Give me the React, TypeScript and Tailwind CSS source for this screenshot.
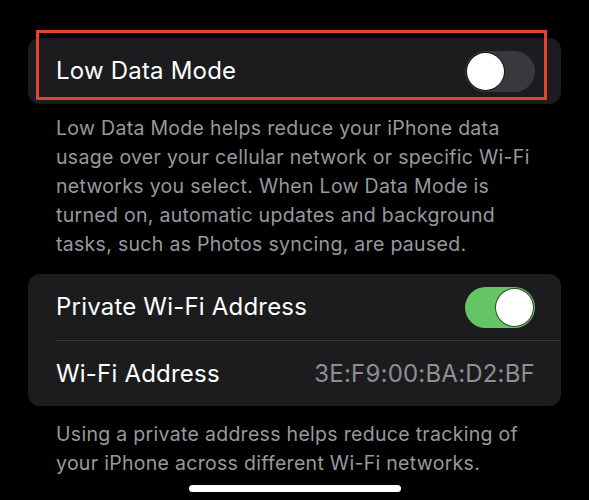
import React from 'react';

const font = { fontFamily: 'Inter, "Liberation Sans", sans-serif' };

const Toggle: React.FC<{ on: boolean }> = ({ on }) => (
  <div
    className={`relative h-[41px] w-[70px] shrink-0 rounded-full ${on ? 'bg-[#65c466]' : 'bg-[#39393d]'}`}
  >
    <div
      className={`absolute top-[2px] h-[37px] w-[37px] rounded-full bg-white shadow-[0_0_0_1px_rgba(0,0,0,0.6)] ${on ? 'right-[2px]' : 'left-[2px]'}`}
    />
  </div>
);

export default function App() {
  return (
    <div className="h-[500px] w-[589px] overflow-hidden bg-black text-white" style={font}>
      <div className="px-[28px] pt-[38px]">
        {/* Low Data Mode */}
        <div className="relative">
          <div className="flex h-[66px] items-center justify-between rounded-[12px] bg-[#1c1c1e] pl-[28px] pr-[26px]">
            <span className="text-[24px] tracking-[0.2px]">Low Data Mode</span>
            <Toggle on={false} />
          </div>
          <div className="pointer-events-none absolute left-[8px] right-[14px] top-[-8px] bottom-[4px] border-[3px] border-[#e2452f]" />
        </div>
        <p className="mt-[10px] pl-[28px] pr-[20px] text-[19.5px] leading-[29px] tracking-[0.3px] text-[#98989e]">
          Low Data Mode helps reduce your iPhone data usage over your cellular network or specific Wi-Fi
          networks you select. When Low Data Mode is turned on, automatic updates and background tasks,
          such as Photos syncing, are paused.
        </p>

        {/* Private address */}
        <div className="mt-[15px] rounded-[12px] bg-[#1c1c1e]">
          <div className="flex h-[66px] items-center justify-between pl-[28px] pr-[26px]">
            <span className="text-[24px] tracking-[0.2px]">Private Wi-Fi Address</span>
            <Toggle on={true} />
          </div>
          <div className="ml-[28px] h-px bg-[#38383a]" />
          <div className="flex h-[65px] items-center justify-between pl-[28px] pr-[26px]">
            <span className="text-[24px] tracking-[0.2px]">Wi-Fi Address</span>
            <span className="text-[24px] tracking-[0.2px] text-[#8e8e93]">3E:F9:00:BA:D2:BF</span>
          </div>
        </div>
        <p className="mt-[14px] pl-[28px] pr-[20px] text-[19.5px] leading-[29px] tracking-[0.3px] text-[#98989e]">
          Using a private address helps reduce tracking of your iPhone across different Wi-Fi networks.
        </p>
        <div className="mt-[7px] flex justify-center">
          <div className="h-[7px] w-[212px] rounded-full bg-white" />
        </div>
      </div>
    </div>
  );
}
